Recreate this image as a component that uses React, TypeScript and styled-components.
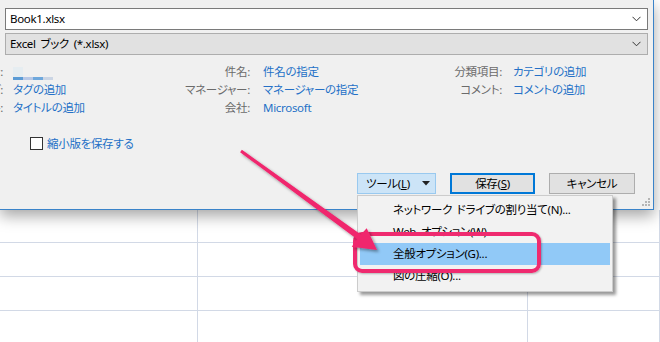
import styled, { createGlobalStyle } from 'styled-components';

const GlobalStyle = createGlobalStyle`
  html, body {
    margin: 0;
    padding: 0;
    background: #ffffff;
    overflow: hidden;
  }
  body {
    font-family: 'Noto Sans', 'Noto Sans CJK JP', sans-serif;
    font-size: 11.5px;
    letter-spacing: -0.3px;
    word-spacing: 2px;
    font-feature-settings: 'palt';
    color: #000;
  }
`;

const Page = styled.div`
  position: relative;
  width: 660px;
  height: 342px;
  overflow: hidden;
  background: #fff;
`;

const Dialog = styled.div`
  position: relative;
  z-index: 1;
  box-sizing: border-box;
  width: 654px;
  height: 210px;
  background: #f0f0f0;
  border-right: 1px solid #3a83c9;
  border-bottom: 1px solid #3a83c9;
  box-shadow: 0 6px 14px rgba(0, 0, 0, 0.35);
  padding-top: 8px;
  display: flex;
  flex-direction: column;
`;

const Combo = styled.div<{ $editable?: boolean }>`
  box-sizing: border-box;
  margin-left: 5px;
  width: 643px;
  height: 22px;
  display: flex;
  align-items: center;
  justify-content: space-between;
  padding: 0 6px 0 4px;
  background: ${(p) => (p.$editable ? '#ffffff' : '#e1e1e1')};
  border: 1px solid ${(p) => (p.$editable ? '#7a7a7a' : '#adadad')};
  & + & {
    margin-top: 3px;
  }
`;

const ComboText = styled.span`
  line-height: 20px;
  white-space: nowrap;
`;

const MetaGrid = styled.div`
  margin-top: 8px;
  display: grid;
  grid-template-columns: 3px 160px 87px 163px 89px 1fr;
  grid-auto-rows: 18px;
  align-items: center;
`;

const MetaLabel = styled.span`
  display: flex;
  justify-content: flex-end;
  white-space: nowrap;
  color: #6b6b6b;
  line-height: 18px;
`;

const MetaValue = styled.span<{ $indent: number }>`
  padding-left: ${(p) => p.$indent}px;
  white-space: nowrap;
  color: #2470c7;
  line-height: 18px;
  display: flex;
  align-items: center;
`;

const Avatar = styled.span`
  display: flex;
  flex-direction: column;
  margin-top: 3px;
`;

const AvatarFace = styled.span`
  width: 10px;
  height: 10px;
  background: #e6edf1;
`;

const AvatarBar = styled.span`
  display: flex;
  height: 3px;
`;

const AvatarSeg = styled.span<{ $c: string }>`
  width: 10px;
  background: ${(p) => p.$c};
`;

const CheckRow = styled.label`
  margin-top: 17px;
  padding-left: 30px;
  display: flex;
  align-items: center;
  gap: 4px;
  height: 18px;
  color: #2470c7;
`;

const CheckBox = styled.span`
  box-sizing: border-box;
  width: 13px;
  height: 13px;
  border: 1px solid #333;
  background: #fff;
`;

const ButtonRow = styled.div`
  margin-top: 21px;
  padding-right: 18px;
  display: flex;
  justify-content: flex-end;
`;

const Button = styled.div<{ $w: number; $kind?: 'tool' | 'default' }>`
  box-sizing: border-box;
  width: ${(p) => p.$w}px;
  height: 21px;
  margin-left: ${(p) => (p.$kind === 'tool' ? 0 : 14)}px;
  display: flex;
  align-items: center;
  justify-content: ${(p) => (p.$kind === 'tool' ? 'space-between' : 'center')};
  padding: ${(p) => (p.$kind === 'tool' ? '0 5px 0 8px' : '0')};
  background: ${(p) => (p.$kind === 'tool' ? '#cce4f7' : '#e1e1e1')};
  border: ${(p) =>
    p.$kind === 'tool'
      ? '1px solid #99c9ef'
      : p.$kind === 'default'
        ? '2px solid #0078d7'
        : '1px solid #adadad'};
  line-height: 18px;
  white-space: nowrap;
`;

const Grip = styled.svg`
  position: absolute;
  right: 3px;
  bottom: 3px;
`;

const Sheet = styled.div`
  display: grid;
  grid-template-columns: 198px 330px 1fr;
  grid-template-rows: 33px 34px 34px 34px;
`;

const Cell = styled.div`
  box-sizing: border-box;
  border-right: 1px solid #d2d9e6;
  border-bottom: 1px solid #d2d9e6;
`;

const Menu = styled.div`
  position: absolute;
  z-index: 2;
  left: 357px;
  top: 195px;
  box-sizing: border-box;
  width: 256px;
  padding: 3px 2px 4px;
  background: #f2f2f2;
  border: 1px solid #cccccc;
  box-shadow: 3px 3px 3px rgba(0, 0, 0, 0.4);
`;

const MenuItem = styled.div<{ $active?: boolean }>`
  height: 22px;
  line-height: 22px;
  padding-left: 33px;
  white-space: nowrap;
  background: ${(p) => (p.$active ? '#91c9f7' : 'transparent')};
`;

const Highlight = styled.div`
  position: absolute;
  z-index: 3;
  left: 353px;
  top: 232px;
  box-sizing: border-box;
  width: 188px;
  height: 41px;
  border: 4px solid #ef2a6f;
  border-radius: 9px;
  box-shadow: 1px 1px 2px rgba(0, 0, 0, 0.25);
`;

const ArrowLayer = styled.svg`
  position: absolute;
  z-index: 4;
  left: 0;
  top: 0;
  pointer-events: none;
`;

const Chevron = () => (
  <svg width="9" height="6" viewBox="0 0 9 6">
    <polyline points="0.5,0.8 4.5,4.8 8.5,0.8" fill="none" stroke="#333" strokeWidth="1" />
  </svg>
);

export default function App() {
  return (
    <Page>
      <GlobalStyle />
      <Dialog>
        <Combo $editable>
          <ComboText>Book1.xlsx</ComboText>
          <Chevron />
        </Combo>
        <Combo>
          <ComboText>Excel ブック (*.xlsx)</ComboText>
          <Chevron />
        </Combo>
        <MetaGrid>
          <MetaLabel>作成者:</MetaLabel>
          <MetaValue $indent={10}>
            <Avatar>
              <AvatarFace />
              <AvatarBar>
                <AvatarSeg $c="#5b9bd5" />
                <AvatarSeg $c="#b8c8e6" />
                <AvatarSeg $c="#6fa8dc" />
                <AvatarSeg $c="#cbd5e4" />
              </AvatarBar>
            </Avatar>
          </MetaValue>
          <MetaLabel>件名:</MetaLabel>
          <MetaValue $indent={13}>件名の指定</MetaValue>
          <MetaLabel>分類項目:</MetaLabel>
          <MetaValue $indent={11}>カテゴリの追加</MetaValue>

          <MetaLabel>タグ:</MetaLabel>
          <MetaValue $indent={10}>タグの追加</MetaValue>
          <MetaLabel>マネージャー:</MetaLabel>
          <MetaValue $indent={13}>マネージャーの指定</MetaValue>
          <MetaLabel>コメント:</MetaLabel>
          <MetaValue $indent={11}>コメントの追加</MetaValue>

          <MetaLabel>タイトル:</MetaLabel>
          <MetaValue $indent={10}>タイトルの追加</MetaValue>
          <MetaLabel>会社:</MetaLabel>
          <MetaValue $indent={13}>Microsoft</MetaValue>
        </MetaGrid>
        <CheckRow>
          <CheckBox />
          <span>縮小版を保存する</span>
        </CheckRow>
        <ButtonRow>
          <Button $w={79} $kind="tool">
            <span>
              ツール(<u>L</u>)
            </span>
            <svg width="8" height="5" viewBox="0 0 8 5">
              <polygon points="0,0 8,0 4,4.5" fill="#222" />
            </svg>
          </Button>
          <Button $w={85} $kind="default">
            <span>
              保存(<u>S</u>)
            </span>
          </Button>
          <Button $w={86}>
            <span>キャンセル</span>
          </Button>
        </ButtonRow>
        <Grip width="8" height="8" viewBox="0 0 8 8">
          <rect x="6" y="0" width="2" height="2" fill="#b5b5b5" />
          <rect x="3" y="3" width="2" height="2" fill="#b5b5b5" />
          <rect x="6" y="3" width="2" height="2" fill="#b5b5b5" />
          <rect x="0" y="6" width="2" height="2" fill="#b5b5b5" />
          <rect x="3" y="6" width="2" height="2" fill="#b5b5b5" />
          <rect x="6" y="6" width="2" height="2" fill="#b5b5b5" />
        </Grip>
      </Dialog>
      <Sheet>
        {Array.from({ length: 12 }).map((_, i) => (
          <Cell key={i} />
        ))}
      </Sheet>
      <Menu>
        <MenuItem>ネットワーク ドライブの割り当て(N)...</MenuItem>
        <MenuItem>Web オプション(W)...</MenuItem>
        <MenuItem $active>全般オプション(G)...</MenuItem>
        <MenuItem>図の圧縮(O)...</MenuItem>
      </Menu>
      <Highlight />
      <ArrowLayer width="660" height="342" viewBox="0 0 660 342">
        <defs>
          <filter id="arrowShadow" x="-10%" y="-10%" width="130%" height="130%">
            <feDropShadow dx="2" dy="2" stdDeviation="1.5" floodColor="#000" floodOpacity="0.4" />
          </filter>
        </defs>
        <polygon
          points="240.1,152.2 357.2,239.3 351.7,246.7 377,250 366.7,228.3 360.8,234.5 241.9,149.8"
          fill="#f0256d"
          filter="url(#arrowShadow)"
        />
      </ArrowLayer>
    </Page>
  );
}
